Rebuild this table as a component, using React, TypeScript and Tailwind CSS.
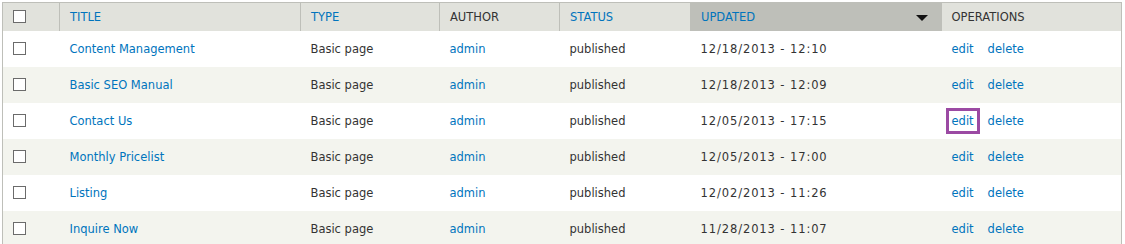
import React from 'react';

type Row = { title: string; type: string; author: string; status: string; updated: string };

const rows: Row[] = [
  { title: 'Content Management', type: 'Basic page', author: 'admin', status: 'published', updated: '12/18/2013 - 12:10' },
  { title: 'Basic SEO Manual', type: 'Basic page', author: 'admin', status: 'published', updated: '12/18/2013 - 12:09' },
  { title: 'Contact Us', type: 'Basic page', author: 'admin', status: 'published', updated: '12/05/2013 - 17:15' },
  { title: 'Monthly Pricelist', type: 'Basic page', author: 'admin', status: 'published', updated: '12/05/2013 - 17:00' },
  { title: 'Listing', type: 'Basic page', author: 'admin', status: 'published', updated: '12/02/2013 - 11:26' },
  { title: 'Inquire Now', type: 'Basic page', author: 'admin', status: 'published', updated: '11/28/2013 - 11:07' },
];

const Checkbox = () => (
  <span className="block w-[13px] h-[13px] border border-[#6b6b6b] bg-white" />
);

const App: React.FC = () => {
  return (
    <div className="pl-[2px] pt-[2px] bg-white" style={{ fontFamily: '"DejaVu Sans", Verdana, sans-serif' }}>
      <table className="w-[1120px] border-collapse border border-[#bebfb9] text-[11.5px] text-[#333]">
        <thead>
          <tr className="h-[28px] bg-[#e1e2dc] uppercase text-left">
            <th className="w-[57px] pl-[10px] border-r border-[#bebfb9] font-normal"><Checkbox /></th>
            <th className="w-[241px] pl-[10px] pt-[2px] border-r border-[#bebfb9] font-normal text-[#0074bd]">Title</th>
            <th className="w-[139px] pl-[10px] pt-[2px] border-r border-[#bebfb9] font-normal text-[#0074bd]">Type</th>
            <th className="w-[120px] pl-[10px] pt-[2px] border-r border-[#bebfb9] font-normal">Author</th>
            <th className="w-[131px] pl-[10px] pt-[2px] border-r border-[#bebfb9] font-normal text-[#0074bd]">Status</th>
            <th className="w-[251px] pl-[10px] pr-[14px] pt-[2px] bg-[#bebfb9] font-normal text-[#0074bd]">
              <div className="flex items-center justify-between">
                <span>Updated</span>
                <svg width="12" height="6" viewBox="0 0 12 6"><path d="M0 0h12L6 6z" fill="#111" /></svg>
              </div>
            </th>
            <th className="pl-[10px] pt-[2px] font-normal">Operations</th>
          </tr>
        </thead>
        <tbody>
          {rows.map((r, i) => (
            <tr key={i} className={`h-[36px] ${i % 2 === 1 ? 'bg-[#f3f4ee]' : 'bg-white'}`}>
              <td className="pl-[10px]"><Checkbox /></td>
              <td className="pl-[10px] pt-[2px] text-[#0074bd]">{r.title}</td>
              <td className="pl-[10px] pt-[2px]">{r.type}</td>
              <td className="pl-[10px] pt-[2px] text-[#0074bd]">{r.author}</td>
              <td className="pl-[10px] pt-[2px]">{r.status}</td>
              <td className="pl-[10px] pt-[2px] tracking-[0.9px]">{r.updated}</td>
              <td className="pl-[10px] pt-[2px] text-[#0074bd]">
                <div className="flex items-center gap-[14px]">
                  <span className={i === 2 ? 'outline-[3px] outline-solid outline-[#9b4aa3] px-[3px] -mx-[3px] pt-[2px] pb-[1px] -mt-[1px]' : ''}>edit</span>
                  <span>delete</span>
                </div>
              </td>
            </tr>
          ))}
        </tbody>
      </table>
    </div>
  );
};

export default App;
